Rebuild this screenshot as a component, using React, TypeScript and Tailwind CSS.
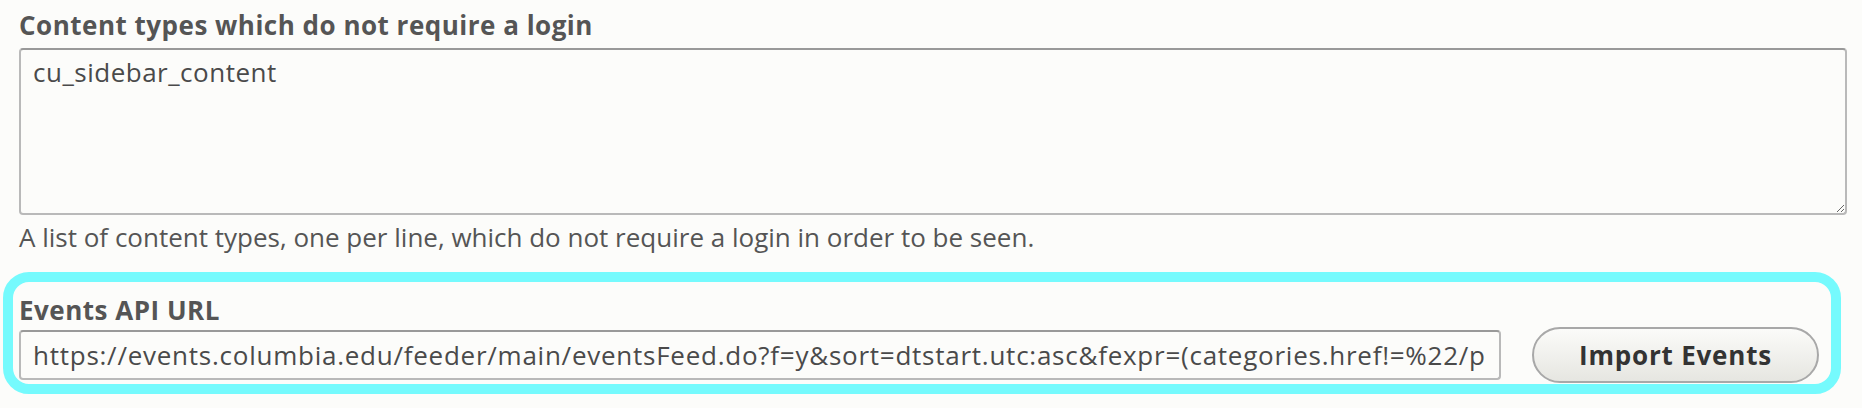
import React from "react";

const url =
  "https://events.columbia.edu/feeder/main/eventsFeed.do?f=y&sort=dtstart.utc:asc&fexpr=(categories.href!=%22/public/.bedework/categories/Ongoing%22)";

export default function App() {
  return (
    <div className="h-[408px] w-full overflow-hidden bg-[#fcfcfa] font-['Open_Sans',sans-serif] text-[#555]">
      <div className="pl-[19px] pr-[15px] pt-[10px]">
        <label className="block text-[26px] font-bold leading-[30px] tracking-[0.5px]">
          Content types which do not require a login
        </label>
        <textarea
          readOnly
          defaultValue="cu_sidebar_content"
          className="mt-[8px] block h-[167px] w-full resize-y rounded-[4px] border-2 border-[#b9b9b9] border-t-[#999] bg-[#fcfcfa] px-[12px] pt-[7px] text-[26px] leading-[30px] tracking-[0.5px] text-[#4a4a4a] outline-none"
        />
        <div className="mt-[7px] text-[26px] leading-[30px]">
          A list of content types, one per line, which do not require a login in order to be seen.
        </div>
      </div>
      <div className="ml-[3px] mt-[20px] h-[122px] w-[1838px] rounded-[26px] border-[10px] border-[#75fafd] pl-[6px] pt-[13px]">
        <label className="block text-[26px] font-bold leading-[30px] tracking-[0.5px]">Events API URL</label>
        <div className="mt-[2px] flex items-center">
          <input
            readOnly
            defaultValue={url}
            className="h-[50px] w-[1482px] rounded-[4px] border-2 border-[#b9b9b9] border-t-[#999] bg-[#fcfcfa] px-[12px] text-[26px] tracking-[0.75px] text-[#4a4a4a] outline-none"
          />
          <button className="ml-[31px] h-[56px] w-[287px] rounded-[28px] border-2 border-[#a8a8a8] bg-gradient-to-b from-[#fbfbf9] to-[#e6e6e1] text-[26px] font-bold tracking-[0.8px] text-[#333]">
            Import Events
          </button>
        </div>
      </div>
    </div>
  );
}
